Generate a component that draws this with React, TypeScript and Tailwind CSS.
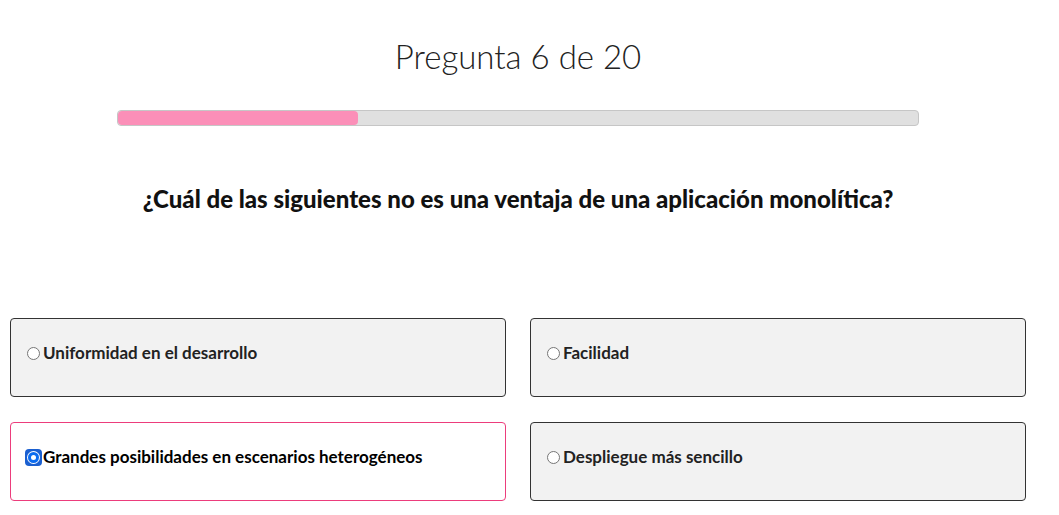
import React from "react";

const options = [
  { text: "Uniformidad en el desarrollo", selected: false },
  { text: "Facilidad", selected: false },
  { text: "Grandes posibilidades en escenarios heterogéneos", selected: true },
  { text: "Despliegue más sencillo", selected: false },
];

function Radio({ selected }: { selected: boolean }) {
  if (selected) {
    return (
      <span className="mr-[1px] -ml-[2px] flex h-[17px] w-[17px] shrink-0 items-center justify-center rounded-[4px] bg-[#1a5fd0]">
        <span className="flex h-[13px] w-[13px] items-center justify-center rounded-full bg-white">
          <span className="flex h-[11px] w-[11px] items-center justify-center rounded-full bg-[#0b6cf0]">
            <span className="h-[5px] w-[5px] rounded-full bg-white" />
          </span>
        </span>
      </span>
    );
  }
  return (
    <span className="mr-[3px] h-[13px] w-[13px] shrink-0 rounded-full border border-[#767676] bg-white" />
  );
}

export default function App() {
  return (
    <div
      className="w-[1036px] bg-white text-[#222]"
      style={{ fontFamily: "Lato, 'Noto Sans', sans-serif" }}
    >
      <h1 className="pt-[37px] text-center text-[33px] font-light leading-[39px] text-[#222]">
        Pregunta 6 de 20
      </h1>
      <div className="mx-auto mt-[34px] h-[16px] w-[802px] overflow-hidden rounded-[4px] border border-[#c6c6c6] bg-[#e0e0e0]">
        <div className="h-full w-[30%] rounded-[4px] bg-[#fb8fb8]" />
      </div>
      <h2 className="mt-[58px] text-center text-[24px] font-black leading-[30px] text-[#111]">
        ¿Cuál de las siguientes no es una ventaja de una aplicación monolítica?
      </h2>
      <div className="mt-[104px] grid grid-cols-2 gap-x-[24px] gap-y-[25px] px-[10px]">
        {options.map((o) => (
          <div
            key={o.text}
            className={
              o.selected
                ? "h-[79px] rounded-[4px] border border-[#ec3d7c] bg-white px-4 pt-[22px]"
                : "h-[79px] rounded-[4px] border border-[#333] bg-[#f2f2f2] px-4 pt-[22px]"
            }
          >
            <div className="flex items-center text-[17px] font-bold leading-[24px] text-[#222]">
              <Radio selected={o.selected} />
              <span className={o.selected ? "text-black" : "text-[#222]"}>{o.text}</span>
            </div>
          </div>
        ))}
      </div>
    </div>
  );
}
